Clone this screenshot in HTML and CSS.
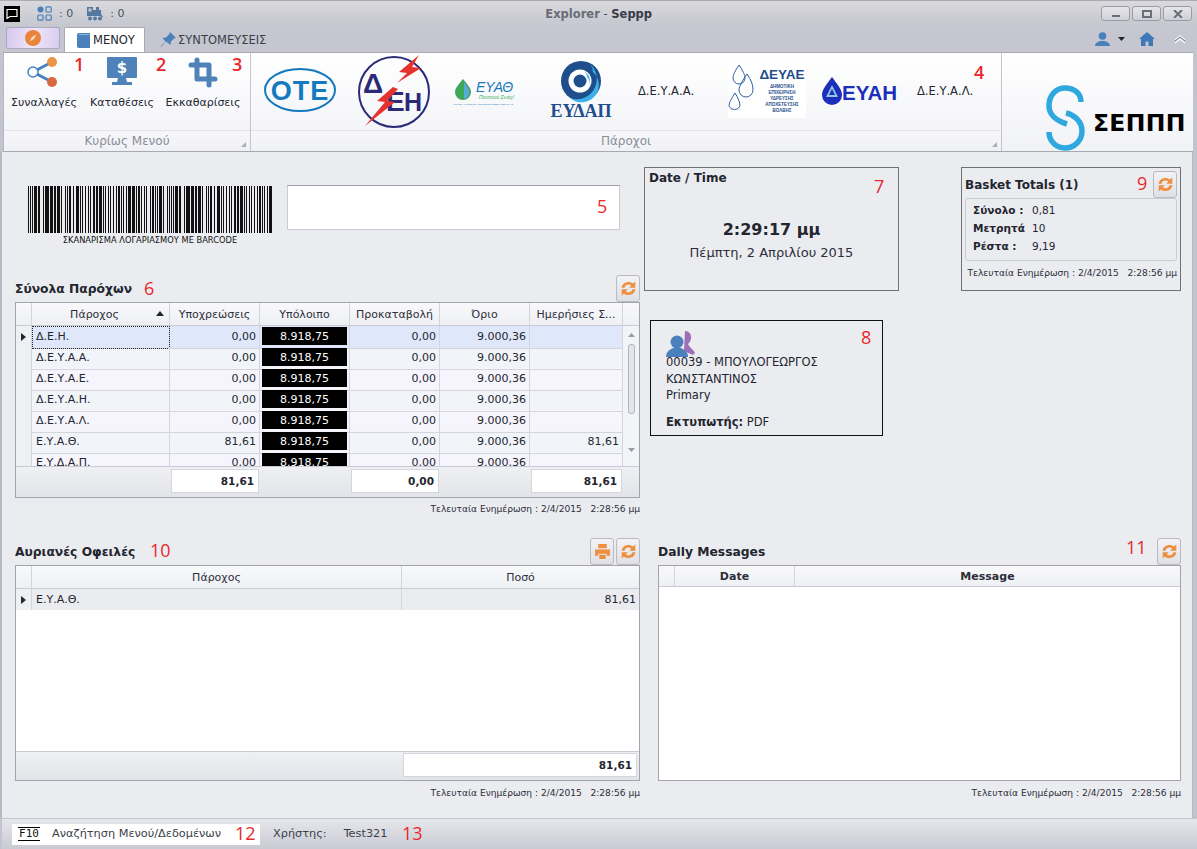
FILE: index.html
```html
<!DOCTYPE html>
<html lang="el">
<head>
<meta charset="utf-8">
<title>Explorer - Seppp</title>
<link rel="stylesheet" href="styles.css">
</head>
<body>
<svg class="defs" width="0" height="0">
  <symbol id="refresh" viewBox="0 0 16 16">
    <path d="M1.5 7.2C2 3.8 4.8 1.8 8 1.8c1.8 0 3.2.6 4.3 1.6L14.4 1.5v5.8H8.6l2-2C9.8 4.6 9 4.3 8 4.3 6 4.3 4.8 5.4 4.3 7.2z"/>
    <path d="M14.5 8.8C14 12.2 11.2 14.2 8 14.2c-1.8 0-3.2-.6-4.3-1.6L1.6 14.5V8.7h5.8l-2 2c.8.7 1.6 1 2.6 1 2 0 3.2-1.1 3.700-2.900z"/>
  </symbol>
</svg>
<div class="win">
  <header class="titlebar">
    <span class="appmark"><svg width="16" height="16" viewBox="0 0 16 16"><rect width="16" height="16" fill="#000"/><path d="M3 3.5h10v7H6l-3 2z" fill="none" stroke="#fff" stroke-width="1.2"/></svg></span>
    <svg class="tb-ic1" width="15" height="15" viewBox="0 0 15 15"><circle cx="3.5" cy="3.5" r="3" fill="#4a7fb5"/><rect x="9" y=".8" width="5.2" height="5.2" rx="1" fill="none" stroke="#4a7fb5" stroke-width="1.2"/><rect x=".8" y="9" width="5.2" height="5.2" rx="1" fill="none" stroke="#4a7fb5" stroke-width="1.2"/><rect x="9" y="9" width="5.2" height="5.2" rx="1" fill="none" stroke="#4a7fb5" stroke-width="1.2"/></svg>
    <span class="tb-count">: 0</span>
    <svg class="tb-ic2" width="16" height="15" viewBox="0 0 16 15"><path d="M0 1h6v9H0zM6 4h8v6H6zM9 1h3v3H9zM14 8l2 3h-2z" fill="#55789f"/><rect x="1.500" y="2.500" width="3" height="3" fill="#c8c9d1"/><circle cx="3" cy="12.5" r="2" fill="#55789f"/><circle cx="8" cy="12.5" r="2" fill="#55789f"/><circle cx="13" cy="12.5" r="2" fill="#55789f"/></svg>
    <span class="tb-count">: 0</span>
    <div class="title"><b class="t-a">Explorer</b> - <b class="t-b">Seppp</b></div>
    <div class="winbtns">
      <span class="winbtn"><svg width="10" height="8" viewBox="0 0 10 8"><rect x="1" y="5" width="8" height="2" fill="#6b6e7a"/></svg></span>
      <span class="winbtn"><svg width="10" height="8" viewBox="0 0 10 8"><rect x="1" y="1" width="8" height="6" fill="none" stroke="#6b6e7a" stroke-width="2"/></svg></span>
      <span class="winbtn"><svg width="10" height="8" viewBox="0 0 10 8"><path d="M1 0l8 8M9 0L1 8" stroke="#6b6e7a" stroke-width="2"/></svg></span>
    </div>
  </header>

  <nav class="tabs">
    <span class="appbtn"><svg width="16" height="16" viewBox="0 0 16 16"><circle cx="8" cy="8" r="8" fill="#e9853a"/><path d="M11.5 4.5L9 9 4.5 11.5 7 7z" fill="#f6dcc6"/></svg></span>
    <span class="tab tab-on"><svg width="13" height="15" viewBox="0 0 13 15"><path d="M2 0h11v15H2a2 2 0 0 1-2-2V2a2 2 0 0 1 2-2z" fill="#4a80bb"/><path d="M2 1.5h10" stroke="#8fb4da"/></svg>ΜΕΝΟΥ</span>
    <span class="tab tab-off"><svg width="15" height="15" viewBox="0 0 15 15"><path d="M9 0l6 6-2 .5-3 3-.5 3.5L5 9.500 1 14l-1 1 0-1 4.500-4.500L1.500 6l3.500-.5 3-3z" fill="#4a80bb"/></svg>ΣΥΝΤΟΜΕΥΣΕΙΣ</span>
    <div class="tabtools">
      <svg width="15" height="14" viewBox="0 0 15 14"><circle cx="7.500" cy="4" r="3.800" fill="#4a80bb"/><path d="M0 14c0-3 3-4 5-5h5c2 1 5 2 5 5z" fill="#4a80bb"/></svg>
      <svg class="caret" width="7" height="4" viewBox="0 0 7 4"><path d="M0 0h7L3.500 4z" fill="#22252e"/></svg>
      <svg class="home" width="16" height="14" viewBox="0 0 16 14"><path d="M8 0l8 7h-2v7H9.500V9.500h-3V14H2V7H0z" fill="#3f78b8"/></svg>
      <svg class="collapse" width="12" height="9" viewBox="0 0 12 9"><path d="M1 5l5-4 5 4M1 8l5-4 5 4" fill="none" stroke="#f4f5f8" stroke-width="1.500"/><path d="M1 6l5-4 5 4" fill="none" stroke="#777a86" stroke-width="1"/></svg>
    </div>
  </nav>

  <section class="ribbon">
    <div class="rgroup rg-main">
      <div class="rbody">
        <div class="rbtn rbtn-a">
          <svg width="36" height="32" viewBox="0 0 36 32"><path d="M7 15L26 5M7 15L26 25" stroke="#4a80bb" stroke-width="3"/><circle cx="7" cy="15" r="5" fill="#fff" stroke="#4a80bb" stroke-width="1.500"/><circle cx="26" cy="5" r="5" fill="#e8954a"/><circle cx="26" cy="25" r="5" fill="#d9683f"/></svg>
          <span>Συναλλαγές</span>
        </div>
        <div class="rbtn rbtn-b">
          <svg width="32" height="32" viewBox="0 0 32 32"><rect x="1" y="0" width="30" height="21" rx="1" fill="#4f82b9"/><path d="M12 21h8l1 4h5v3H6v-3h5z" fill="#4f82b9"/><text x="16" y="16" class="dollar">$</text></svg>
          <span>Καταθέσεις</span>
        </div>
        <div class="rbtn rbtn-c">
          <svg width="30" height="32" viewBox="0 0 30 32"><path d="M9 3v19h18M3 8h18v20" fill="none" stroke="#4f82b9" stroke-width="5" stroke-linejoin="round" stroke-linecap="round"/></svg>
          <span>Εκκαθαρίσεις</span>
        </div>
      </div>
      <div class="rlabel">Κυρίως Μενού<i class="launcher"></i></div>
    </div>
    <div class="rgroup rg-prov">
      <div class="rbody logos">
        <svg class="lg-ote" width="72" height="46" viewBox="0 0 72 46"><ellipse cx="36" cy="23" rx="35" ry="21" fill="none" stroke="#1579c0" stroke-width="2"/><text x="36" y="33" class="ote">OTE</text></svg>
        <svg class="lg-deh" width="74" height="74" viewBox="0 0 74 74"><circle cx="37" cy="37" r="35" fill="none" stroke="#2a2a78" stroke-width="2"/><text x="6" y="38" class="deh deh-d">Δ</text><text x="29" y="56" class="deh deh-e">Ε</text><text x="47" y="56" class="deh deh2">Η</text><path d="M62 0L42 17l8 1-10 10 24-15-9-1zM36 32L20 46l8 1L8 71l30-24-8-1 11-12z" fill="#e5322d"/></svg>
        <svg class="lg-eyath" width="64" height="28" viewBox="0 0 64 28"><path d="M10 1c4 5 8 9 8 13a8 8 0 0 1-8 8 8 8 0 0 1-8-8c0-4 4-8 8-13z" fill="#3ea85a"/><path d="M11 4c3 4 5 7 5 10a6 6 0 0 1-5 7z" fill="#5aa9dd"/><text x="23" y="14" class="ey1">ΕΥΑΘ</text><text x="26" y="21" class="ey2">Παντοιού Ζωής!</text><text x="1" y="27" class="ey3">ΕΤΑΙΡΕΙΑ ΥΔΡΕΥΣΗΣ &amp; ΑΠΟΧΕΤΕΥΣΗΣ ΘΕΣΣΑΛΟΝΙΚΗΣ Α.Ε.</text></svg>
        <svg class="lg-eydap" width="62" height="60" viewBox="0 0 62 60"><circle cx="31" cy="21" r="20" fill="#1e4f8c"/><path d="M37 2A20 20 0 0 1 20 38 16 16 0 0 0 43 12 12 12 0 0 0 37 2z" fill="#3cb1e6"/><circle cx="30" cy="21" r="11.500" fill="#fff"/><path d="M33 11a11 11 0 0 1 4 18 8 8 0 0 0 0-12 7 7 0 0 0-4-6z" fill="#3cb1e6"/><circle cx="30" cy="21" r="6.500" fill="#1e4f8c"/><text x="31" y="57" class="eydap">ΕΥΔΑΠ</text></svg>
        <span class="lg-txt lg-a">Δ.Ε.Υ.Α.Α.</span>
        <svg class="lg-deyae" width="78" height="54" viewBox="0 0 78 54"><rect width="78" height="54" fill="#fff"/><g fill="none" stroke="#2d5f9e"><path d="M11 1c4 6 6 10 6 13a6 6 0 0 1-12 0c0-3 2-7 6-13zM19 10c4 6 6 10 6 16a7 7 0 0 1-14 0c0-4 4-10 8-16zM7 29c3 5 5 9 5 13a6 6 0 0 1-11 0c0-4 3-8 6-13z"/></g><text x="54" y="15" class="dy1">ΔΕΥΑΕ</text><text x="54" y="24" class="dy2">ΔΗΜΟΤΙΚΗ</text><text x="54" y="30" class="dy2">ΕΠΙΧΕΙΡΗΣΗ</text><text x="54" y="36" class="dy2">ΥΔΡΕΥΣΗΣ</text><text x="54" y="42" class="dy2">ΑΠΟΧΕΤΕΥΣΗΣ</text><text x="54" y="48" class="dy2">ΒΟΛΒΗΣ</text></svg>
        <svg class="lg-deyah" width="80" height="30" viewBox="0 0 80 30"><path d="M11 1c5 7 10 12 10 18a10 10 0 0 1-20 0C1 13 6 8 11 1z" fill="#1c2fbb"/><path d="M11 9l6 12H5z" fill="#8fc6ea"/><path d="M11 13l3 6H8z" fill="#1c2fbb"/><text x="21" y="24" class="dh">ΕΥΑΗ</text></svg>
        <span class="lg-txt lg-b">Δ.Ε.Υ.Α.Λ.</span>
      </div>
      <div class="rlabel">Πάροχοι<i class="launcher"></i></div>
    </div>
    <div class="rgroup rg-brand">
      <svg width="146" height="66" viewBox="0 0 146 66"><path d="M35 17C35 8 28 3 19 3S3 10 3 21c0 9 8 15 18 18" fill="none" stroke="#2fa9dd" stroke-width="5.500"/><path d="M20 28c9 2 16 9 16 18 0 10-8 17-17 17S3 56 3 47" fill="none" stroke="#2fa9dd" stroke-width="5.500"/><text x="47" y="46" class="brand">ΣΕΠΠΠ</text></svg>
    </div>
  </section>

  <main class="content">
    <div class="upper">
      <div class="col-left">
        <div class="scan">
          <div class="barcode">
            <svg width="244" height="47" viewBox="0 0 244 47"><line x1="0" y1="23.500" x2="244" y2="23.500" stroke="#111" stroke-width="47" stroke-dasharray="1 1 1 1 1 1 3 1 2 3 1 1 4 1 3 1 2 1 3 1 1 3 1 1 1 1 2 2 1 2 3 1 1 1 1 2 1 2 1 1 1 2 2 1 2 1 3 1 1 1 1 2 1 1 1 2 1 2 1 1 2 1 1 1 1 2 1 1 3 1 3 1 1 1 2 1 1 2 1 1 1 3 1 1 2 1 1 1 1 1 3 1 1 3 1 1"/></svg>
            <span>ΣΚΑΝΑΡΙΣΜΑ ΛΟΓΑΡΙΑΣΜΟΥ ΜΕ BARCODE</span>
          </div>
          <div class="scaninput"></div>
        </div>
        <div class="sechead sh-prov">
          <h2>Σύνολα Παρόχων</h2>
          <button class="iconbtn"><svg><use href="#refresh"/></svg></button>
        </div>
        <div class="gridbox">
          <div class="grow ghead c7">
            <div class="gc"></div><div class="gc gc-sort">Πάροχος<svg width="8" height="5" viewBox="0 0 8 5"><path d="M0 5h8L4 0z" fill="#22252e"/></svg></div><div class="gc">Υποχρεώσεις</div><div class="gc">Υπόλοιπο</div><div class="gc">Προκαταβολή</div><div class="gc">Όριο</div><div class="gc">Ημερήσιες Σ...</div><div class="gc gc-end"></div>
          </div>
          <div class="gbodywrap">
            <div class="gbody">
              <div class="grow c6 r-sel"><div class="gi"><svg width="5" height="8" viewBox="0 0 5 8"><path d="M0 0l5 4-5 4z" fill="#22252e"/></svg></div><div class="gt gt-focus">Δ.Ε.Η.</div><div class="gn">0,00</div><div class="gk"><span>8.918,75</span></div><div class="gn">0,00</div><div class="gn">9.000,36</div><div class="gn"></div></div>
              <div class="grow c6 r-a"><div class="gi"></div><div class="gt">Δ.Ε.Υ.Α.Α.</div><div class="gn">0,00</div><div class="gk"><span>8.918,75</span></div><div class="gn">0,00</div><div class="gn">9.000,36</div><div class="gn"></div></div>
              <div class="grow c6 r-b"><div class="gi"></div><div class="gt">Δ.Ε.Υ.Α.Ε.</div><div class="gn">0,00</div><div class="gk"><span>8.918,75</span></div><div class="gn">0,00</div><div class="gn">9.000,36</div><div class="gn"></div></div>
              <div class="grow c6 r-a"><div class="gi"></div><div class="gt">Δ.Ε.Υ.Α.Η.</div><div class="gn">0,00</div><div class="gk"><span>8.918,75</span></div><div class="gn">0,00</div><div class="gn">9.000,36</div><div class="gn"></div></div>
              <div class="grow c6 r-b"><div class="gi"></div><div class="gt">Δ.Ε.Υ.Α.Λ.</div><div class="gn">0,00</div><div class="gk"><span>8.918,75</span></div><div class="gn">0,00</div><div class="gn">9.000,36</div><div class="gn"></div></div>
              <div class="grow c6 r-a"><div class="gi"></div><div class="gt">Ε.Υ.Α.Θ.</div><div class="gn">81,61</div><div class="gk"><span>8.918,75</span></div><div class="gn">0,00</div><div class="gn">9.000,36</div><div class="gn">81,61</div></div>
              <div class="grow c6 r-b"><div class="gi"></div><div class="gt">Ε.Υ.Δ.Α.Π.</div><div class="gn">0,00</div><div class="gk"><span>8.918,75</span></div><div class="gn">0,00</div><div class="gn">9.000,36</div><div class="gn"></div></div>
            </div>
            <div class="scroll">
              <svg width="7" height="4" viewBox="0 0 7 4"><path d="M0 4h7L3.500 0z" fill="#9a9ca6"/></svg>
              <i class="thumb"></i>
              <svg width="7" height="4" viewBox="0 0 7 4"><path d="M0 0h7L3.500 4z" fill="#9a9ca6"/></svg>
            </div>
          </div>
          <div class="gfoot c7">
            <div></div><div></div><div class="sum">81,61</div><div></div><div class="sum">0,00</div><div></div><div class="sum">81,61</div><div></div>
          </div>
        </div>
        <div class="stamp stamp-up">Τελευταία Ενημέρωση : 2/4/2015 &nbsp; 2:28:56 μμ</div>
      </div>

      <div class="col-right">
        <div class="boxes">
          <div class="box box-date">
            <h3>Date / Time</h3>
            <div class="clock">2:29:17 μμ</div>
            <div class="today">Πέμπτη, 2 Απριλίου 2015</div>
          </div>
          <div class="box box-basket">
            <div class="basket-head">
              <h3>Basket Totals (1)</h3>
              <button class="iconbtn"><svg><use href="#refresh"/></svg></button>
            </div>
            <dl class="basket-inner">
              <dt>Σύνολο :</dt><dd>0,81</dd>
              <dt>Μετρητά</dt><dd>10</dd>
              <dt>Ρέστα :</dt><dd>9,19</dd>
            </dl>
            <div class="stamp stamp-basket">Τελευταία Ενημέρωση : 2/4/2015 &nbsp; 2:28:56 μμ</div>
          </div>
        </div>
        <div class="box-user">
          <svg width="30" height="26" viewBox="0 0 30 26"><path d="M19 0a6 6 0 0 1 6 7c0 3-2 5-3 6 1 3 5 5 7 9l-2 2c-3-1-6-3-9-4z" fill="#9c6fb8"/><circle cx="11" cy="11" r="6.500" fill="#4a80bb"/><path d="M0 26c0-5 3-7 7-9h8c4 2 7 4 7 9z" fill="#4a80bb"/></svg>
          <p>00039 - ΜΠΟΥΛΟΓΕΩΡΓΟΣ<br>ΚΩΝΣΤΑΝΤΙΝΟΣ<br>Primary</p>
          <p class="printer"><b>Εκτυπωτής:</b> PDF</p>
        </div>
      </div>
    </div>

    <div class="lower">
      <div class="low-left">
        <div class="sechead sh-low">
          <h2>Αυριανές Οφειλές</h2>
          <button class="iconbtn"><svg viewBox="0 0 16 16"><path d="M4 1h8v4H4zM1 6h14v6h-3v-2H4v2H1zM5 11h6v4H5z" fill="#ed8f3f"/></svg></button>
          <button class="iconbtn"><svg><use href="#refresh"/></svg></button>
        </div>
        <div class="gridbox gb-fill">
          <div class="grow ghead c2">
            <div class="gc"></div><div class="gc">Πάροχος</div><div class="gc">Ποσό</div>
          </div>
          <div class="grow c2 r-g"><div class="gi"><svg width="5" height="8" viewBox="0 0 5 8"><path d="M0 0l5 4-5 4z" fill="#22252e"/></svg></div><div class="gt">Ε.Υ.Α.Θ.</div><div class="gn">81,61</div></div>
          <div class="gempty"></div>
          <div class="gfoot c2 foot-low"><div></div><div></div><div class="sum">81,61</div></div>
        </div>
        <div class="stamp">Τελευταία Ενημέρωση : 2/4/2015 &nbsp; 2:28:56 μμ</div>
      </div>
      <div class="low-right">
        <div class="sechead sh-low">
          <h2>Daily Messages</h2>
          <button class="iconbtn"><svg><use href="#refresh"/></svg></button>
        </div>
        <div class="gridbox gb-fill">
          <div class="grow ghead ghead-b cm">
            <div class="gc"></div><div class="gc">Date</div><div class="gc">Message</div>
          </div>
          <div class="gempty"></div>
        </div>
        <div class="stamp">Τελευταία Ενημέρωση : 2/4/2015 &nbsp; 2:28:56 μμ</div>
      </div>
    </div>
  </main>

  <footer class="status">
    <div class="search"><kbd>F10</kbd><span>Αναζήτηση Μενού/Δεδομένων</span></div>
    <span class="st-user">Χρήστης:</span>
    <span class="st-name">Test321</span>
  </footer>

  <span class="num n1">1</span><span class="num n2">2</span><span class="num n3">3</span><span class="num n4">4</span><span class="num n5">5</span><span class="num n6">6</span><span class="num n7">7</span><span class="num n8">8</span><span class="num n9">9</span><span class="num n10">10</span><span class="num n11">11</span><span class="num n12">12</span><span class="num n13">13</span>
</div>
</body>
</html>
```

FILE: styles.css
```css
* { box-sizing: border-box; }
html, body { margin: 0; padding: 0; }
body { background: #ebecf0; font: 11px/14px "DejaVu Sans", sans-serif; color: #23252f; }
.defs { position: absolute; }
.win { position: relative; width: 1197px; height: 849px; overflow: hidden; display: flex; flex-direction: column; background: #c3c4ce; }

/* title bar */
.titlebar { height: 26px; flex: none; display: flex; align-items: center; padding: 0 5px 0 4px; background: linear-gradient(#d9d9dd, #c6c7cf); border-top: 1px solid #a9aab2; color: #4d5060; }
.appmark { display: flex; }
.tb-ic1 { margin-left: 17px; }
.tb-ic2 { margin-left: 14px; }
.tb-count { margin-left: 7px; font-size: 11px; }
.title { flex: 1; text-align: center; font-size: 11.500px; padding-right: 28px; color: #4a4c58; }
.t-a { color: #6a6c78; }
.t-b { color: #383a46; }
.winbtns { display: flex; gap: 2px; }
.winbtn { width: 29px; height: 15px; display: flex; align-items: center; justify-content: center; border: 1px solid #9a9ba5; border-radius: 3px; background: linear-gradient(#e6e6ea, #cfd0d7); }

/* tabs */
.tabs { height: 26px; flex: none; display: flex; align-items: flex-end; padding-left: 6px; background: #c5c6d0; }
.appbtn { width: 54px; height: 22px; margin-bottom: 3px; display: flex; align-items: center; justify-content: center; border: 1px solid #a9a9c0; border-radius: 2px; background: linear-gradient(100deg, #d5c6ec, #efe6f9 50%, #d9cbee); }
.tab { display: flex; align-items: center; font-size: 11.500px; }
.tab-on { width: 81px; height: 25px; margin-left: 4px; padding-left: 12px; gap: 3px; background: #fff; border: 1px solid #a8a9b3; border-bottom: 0; border-radius: 2px 2px 0 0; color: #23252f; }
.tab-off { margin-left: 16px; height: 25px; gap: 2px; color: #3c3e4a; }
.tabtools { margin-left: auto; height: 26px; display: flex; align-items: center; padding-right: 11px; }
.caret { margin-left: 8px; }
.home { margin-left: 14px; }
.collapse { margin-left: 19px; }

/* ribbon */
.ribbon { height: 100px; flex: none; display: flex; margin: 0 4px 0 3px; background: linear-gradient(#fff, #f1f2f6); border-top: 1px solid #a8a9b3; border-bottom: 1px solid #a8a9b3; border-left: 1px solid #b5b6c0; }
.rgroup { display: flex; flex-direction: column; border-right: 1px solid #c4c5cd; position: relative; }
.rg-main { width: 247px; }
.rg-prov { width: 751px; }
.rg-brand { flex: 1; border-right: 0; padding: 32px 0 0 44px; }
.rbody { height: 77px; display: flex; }
.rlabel { height: 21px; border-top: 1px solid #e2e3e8; text-align: center; font-size: 12px; line-height: 20px; color: #8b8d99; background: linear-gradient(#f7f7fa, #f0f1f5); position: relative; }
.launcher { position: absolute; right: 4px; bottom: 4px; border-left: 5px solid transparent; border-bottom: 5px solid #a9abb5; }
.rbtn { display: flex; flex-direction: column; align-items: center; font-size: 11px; color: #23252f; padding-top: 4px; }
.rbtn svg { flex: none; }
.rbtn span { margin-top: 7px; line-height: 14px; white-space: nowrap; }
.rbtn-a { width: 66px; margin-left: 7px; }
.rbtn-b { width: 66px; margin-left: 12px; }
.rbtn-c { width: 74px; margin-left: 11px; }
.dollar { fill: #fff; font: bold 15px "DejaVu Sans", sans-serif; text-anchor: middle; }
.logos { align-items: flex-start; }
.logos svg, .lg-txt { flex: none; }
.lg-ote { margin: 14px 0 0 13px; }
.lg-deh { margin: 2px 0 0 21px; }
.lg-eyath { margin: 25px 0 0 22px; }
.lg-eydap { margin: 7px 0 0 33px; }
.lg-txt { font-size: 11.500px; line-height: 14px; color: #23252f; white-space: nowrap; }
.lg-a { margin: 31px 0 0 26px; width: 60px; }
.lg-deyae { margin: 11px 0 0 30px; }
.lg-deyah { margin: 23px 0 0 15px; }
.lg-b { margin: 31px 0 0 16px; }
.ote { font: bold 27px "Liberation Sans", sans-serif; fill: #1579c0; text-anchor: middle; letter-spacing: 1px; }
.deh { font: bold 26px "Liberation Sans", sans-serif; fill: #2a2a78; }
.deh-d { font-size: 28px; }
.deh-e { font-size: 28px; }
.deh2 { font-size: 25px; }
.ey1 { font: italic 14px "Liberation Sans", sans-serif; fill: #1879b9; }
.ey2 { font: italic 5px "Liberation Sans", sans-serif; fill: #3ea85a; }
.ey3 { font: 2.100px "Liberation Sans", sans-serif; fill: #1879b9; }
.eydap { font: bold 18px "Liberation Serif", serif; fill: #1e4f8c; text-anchor: middle; }
.dy1 { font: bold 13.500px "Liberation Sans", sans-serif; fill: #1e4f8c; text-anchor: middle; }
.dy2 { font: bold 4.500px "Liberation Sans", sans-serif; fill: #1e4f8c; text-anchor: middle; }
.dh { font: bold 20.500px "Liberation Sans", sans-serif; fill: #1c2fbb; }
.brand { font: bold 23.500px "DejaVu Sans", sans-serif; fill: #000; letter-spacing: .3px; }

/* content */
.content { flex: 1; min-height: 0; display: flex; flex-direction: column; margin: 0 4px 0 0; padding-left: 13px; background: #ebecf0; border-left: 2px solid #b8b9c4; border-right: 1px solid #b8b9c4; }
.upper { display: flex; height: 386px; flex: none; }
.col-left { width: 625px; flex: none; }
.scan { display: flex; padding: 33px 0 0 13px; height: 123px; }
.barcode { width: 244px; flex: none; display: flex; flex-direction: column; align-items: center; }
.barcode svg { flex: none; margin-top: 1px; }
.barcode span { font-size: 8.300px; line-height: 12px; margin-top: 1px; white-space: nowrap; color: #111; }
.scaninput { width: 333px; height: 45px; margin-left: 15px; background: #fff; border: 1px solid #c9cad2; border-top-color: #9d9ea8; }
.sechead { display: flex; align-items: flex-end; }
.sechead h2 { margin: 0 auto 6px 0; font: bold 12.300px/14px "DejaVu Sans", sans-serif; color: #23252f; }
.sh-prov { height: 27px; }
.sh-low { height: 27px; gap: 2px; }
.iconbtn { width: 24px; height: 27px; padding: 0; flex: none; display: flex; align-items: center; justify-content: center; background: linear-gradient(#f3f3f6, #dfe0e5); border: 1px solid #b9bac3; border-radius: 3px; }
.iconbtn svg { width: 17px; height: 17px; fill: #ed8f3f; }

/* data grids */
.gridbox { width: 625px; background: #fff; border: 1px solid #a3a4ae; }
.grow { display: grid; height: 21px; line-height: 22px; }
.c7 { grid-template-columns: 16px 138px 90px 90px 90px 90px 93px 16px; }
.c6 { grid-template-columns: 16px 138px 90px 90px 90px 90px 93px; }
.c2 { grid-template-columns: 16px 370px 237px; }
.cm { grid-template-columns: 16px 120px 385px; }
.ghead { height: 23px; line-height: 23px; background: linear-gradient(#f9f9fb, #eef0f4); border-bottom: 1px solid #c9cad2; }
.ghead-b { font-weight: bold; height: 21px; line-height: 21px; }
.gc { text-align: center; border-right: 1px solid #d4d5dc; color: #2c2e3a; white-space: nowrap; overflow: hidden; }
.gc:last-child { border-right: 0; }
.gc-sort { position: relative; padding-right: 12px; }
.gc-sort svg { position: absolute; right: 5px; top: 8px; }
.gbodywrap { display: flex; height: 140px; overflow: hidden; background: #f3f6fa; }
.gbody { width: 607px; flex: none; }
.gbody .grow { width: 607px; }
.gi, .gt, .gn, .gk { border-right: 1px solid #d5d6dd; border-bottom: 1px solid #d5d6dd; white-space: nowrap; }
.gi { display: flex; align-items: center; justify-content: center; background: #eff0f4; }
.gt { padding-left: 4px; }
.gn { text-align: right; padding-right: 3px; }
.gk { padding: 1px 2px; }
.gk span { display: block; height: 18px; line-height: 19px; background: #000; color: #fff; text-align: center; }
.gt-focus { outline: 1px dotted #222; outline-offset: -1px; }
.r-sel .gt, .r-sel .gn, .r-sel .gk { background: #dfe8fa; }
.r-a { background: #f1f5fa; }
.r-b { background: #f6f4fc; }
.r-g { background: #ebecf0; }
.r-g .gn:last-child { border-right: 0; }
.scroll { width: 16px; flex: none; display: flex; flex-direction: column; align-items: center; background: #f3f4f8; padding-top: 7px; }
.thumb { display: block; width: 7px; height: 70px; margin: 7px 0 34px; background: #e4e5ea; border: 1px solid #b3b5bf; border-radius: 3px; }
.gfoot { display: grid; height: 31px; background: linear-gradient(#eff0f3, #e3e4e9); border-top: 1px solid #c9cad2; }
.sum { height: 24px; margin: 2px 1px; background: #fff; border: 1px solid #d5d6dd; font-size: 10.500px; font-weight: bold; line-height: 23px; text-align: right; padding-right: 4px; }
.gb-fill { display: flex; flex-direction: column; height: 216px; flex: none; }
.gempty { flex: 1; background: #fff; }
.foot-low { height: 29px; }
.foot-low .sum { margin: 1px 2px 1px 1px; }
.stamp { text-align: right; font-size: 9.100px; line-height: 12px; margin-top: 6px; color: #2c2e3a; white-space: nowrap; }
.stamp-up { margin-top: 5px; }

/* right column */
.col-right { flex: 1; padding-left: 4px; padding-top: 15px; }
.boxes { display: flex; }
.box { height: 124px; border: 1px solid #6f7078; }
.box h3 { margin: 0; font: bold 12px/14px "DejaVu Sans", sans-serif; }
.box-date { width: 255px; padding: 3px 4px; text-align: center; }
.box-date h3 { text-align: left; }
.clock { font: bold 16px/22px "DejaVu Sans", sans-serif; margin-top: 34px; }
.today { font-size: 13px; line-height: 18px; margin-top: 3px; color: #2c2e3a; }
.box-basket { width: 220px; margin-left: 62px; padding: 3px 3px 0; }
.basket-head { display: flex; align-items: center; height: 27px; }
.basket-head h3 { margin: 0 auto 0 0; }
.box-basket .basket-inner { height: 63px; margin: 0; padding: 2px 0 0 7px; display: grid; grid-template-columns: 59px 1fr; grid-auto-rows: 18px; border: 1px solid #c9cad2; border-radius: 3px; line-height: 18px; }
.basket-inner dt { font-weight: bold; font-size: 10.500px; }
.basket-inner dd { margin: 0; font-size: 10.500px; }
.stamp-basket { margin-top: 6px; }
.box-user { width: 233px; height: 116px; margin: 29px 0 0 6px; padding: 10px 15px 0; border: 1px solid #111; font-size: 11.500px; }
.box-user svg { display: block; }
.box-user p { margin: -3px 0 0; line-height: 16.500px; white-space: nowrap; }
.box-user .printer { margin-top: 10px; }

/* lower row */
.lower { display: flex; flex: none; }
.low-left { width: 625px; flex: none; }
.low-right { width: 523px; margin-left: 18px; flex: none; }
.low-right .gridbox { width: 523px; }

/* status */
.status { height: 31px; flex: none; display: flex; align-items: center; padding-left: 10px; margin-left: 2px; background: linear-gradient(#e6e7eb, #c9cad3); border-top: 1px solid #c4c5cd; color: #3c3e4a; font-size: 11.300px; }
.search { width: 248px; height: 21px; display: flex; align-items: center; background: #fff; padding-left: 6px; }
.search kbd { font: 11px/12px "DejaVu Sans Mono", monospace; border-top: 1px solid #000; border-bottom: 1px solid #000; width: 22px; text-align: center; color: #111; }
.search span { margin-left: 12px; white-space: nowrap; }
.st-user { margin-left: 13px; }
.st-name { margin-left: 17px; }

/* red numbered callouts laid over the screenshot */
.num { position: absolute; color: #e8282c; font: 18px/20px "Open Sans", sans-serif; }
.n1, .n2, .n3, .n4 { font-weight: 600; }
.n1 { left: 74px; top: 54px; }
.n2 { left: 156px; top: 54px; }
.n3 { left: 232px; top: 54px; }
.n4 { left: 974px; top: 62px; }
.n5 { left: 597px; top: 196px; }
.n6 { left: 144px; top: 278px; }
.n7 { left: 874px; top: 176px; }
.n8 { left: 861px; top: 327px; }
.n9 { left: 1137px; top: 173px; }
.n10 { left: 150px; top: 540px; }
.n11 { left: 1126px; top: 537px; }
.n12 { left: 235px; top: 823px; }
.n13 { left: 402px; top: 823px; }
```
